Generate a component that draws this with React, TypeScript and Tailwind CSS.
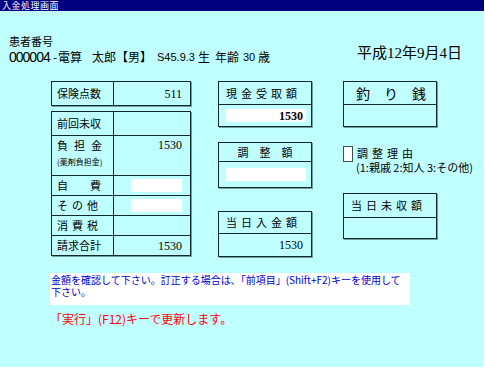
import React from "react";

const jp = "font-['Noto_Sans_CJK_JP',sans-serif]";
const num = "font-['Liberation_Serif','Noto_Sans_CJK_JP',serif]";
const box = "border border-[#102828] shadow-[1px_1px_0_#6f9f9f] box-border";

function Input({ w, value }: { w: string; value?: string }) {
  return (
    <div className={`${w} h-[13px] bg-white flex items-center justify-end pr-[3px] ${num} text-[12px] font-bold leading-none text-black`}>
      {value}
    </div>
  );
}

function SmallBox({
  label,
  headH,
  bodyClass,
  children,
  labelClass,
}: {
  label: React.ReactNode;
  headH: string;
  bodyClass?: string;
  children?: React.ReactNode;
  labelClass?: string;
}) {
  return (
    <div className={`${box} w-[94px] h-[46px] flex flex-col`}>
      <div className={`${headH} border-b border-[#102828] flex items-center ${labelClass ?? "pl-[7px]"}`}>{label}</div>
      <div className={`flex-1 flex ${bodyClass ?? ""}`}>{children}</div>
    </div>
  );
}

export default function App() {
  return (
    <div className={`w-[485px] h-[368px] bg-[#c0ffff] flex flex-col overflow-hidden border-r border-b border-white text-black ${jp}`}>
      <div className="h-[11px] shrink-0 bg-[#000080] text-white text-[9px] leading-[11px] pl-[2px] tracking-[0.5px]">入金処理画面</div>

      <div className="flex h-[65px] shrink-0">
        <div className="flex flex-col pl-[9px] pt-[24px]">
          <div className="text-[11px] leading-[12px] h-[12px]">患者番号</div>
          <div className="mt-[3px] h-[14px] flex items-center text-[12px] leading-[14px] whitespace-pre">
            <span className="shrink-0 font-['Liberation_Sans',sans-serif] text-[14px] tracking-[-1px] w-[44px]">000004</span>
            <span className="shrink-0 w-[5px]">-</span>
            <span className="shrink-0 w-[34px]">電算</span>
            <span className="shrink-0 w-[24px]">太郎</span>
            <span className="shrink-0 w-[41px]">【男】</span>
            <span className="shrink-0 w-[41px] font-['Liberation_Sans',sans-serif] text-[11px]">S45.9.3</span>
            <span className="shrink-0 w-[17px]">生</span>
            <span className="shrink-0 w-[28px]">年齢</span>
            <span className="shrink-0 w-[15px] font-['Liberation_Sans',sans-serif] text-[11px]">30</span>
            <span className="shrink-0">歳</span>
          </div>
        </div>
        <div className={`ml-auto mr-[22px] pt-[33px] text-[15px] leading-[18px] ${num} whitespace-pre`}>平成12年9月4日</div>
      </div>

      <div className="flex mt-[5px] pl-[51px]">
        {/* Column 1 */}
        <div className="w-[140px] flex flex-col">
          <div className={`${box} h-[25px] flex`}>
            <div className="w-[62px] border-r border-[#102828] flex items-center pl-[5px] text-[11px]">保険点数</div>
            <div className={`flex-1 flex items-center justify-end pr-[8px] ${num} text-[12px]`}>511</div>
          </div>
          <div className={`${box} mt-[5px] h-[145px] flex flex-col text-[11px]`}>
            <div className="h-[23px] flex">
              <div className="w-[62px] border-r border-[#102828] flex items-center pl-[5px]">前回未収</div>
              <div className="flex-1" />
            </div>
            <div className="h-[40px] flex border-t border-[#102828]">
              <div className="w-[62px] border-r border-[#102828] flex flex-col pl-[5px] pt-[3px]">
                <span className="tracking-[6px] leading-[13px]">負担金</span>
                <span className="text-[8px] leading-[10px] mt-[5px]">(薬剤負担金)</span>
              </div>
              <div className={`flex-1 flex justify-end pr-[8px] pt-[3px] ${num} text-[12px] leading-[13px]`}>1530</div>
            </div>
            <div className="h-[20px] flex border-t border-[#102828]">
              <div className="w-[62px] border-r border-[#102828] flex items-center pl-[5px] whitespace-pre">自　　費</div>
              <div className="flex-1 flex items-center pl-[17px]">
                <Input w="w-[51px]" />
              </div>
            </div>
            <div className="h-[20px] flex border-t border-[#102828]">
              <div className="w-[62px] border-r border-[#102828] flex items-center pl-[5px] tracking-[4px]">その他</div>
              <div className="flex-1 flex items-center pl-[17px]">
                <Input w="w-[51px]" />
              </div>
            </div>
            <div className="h-[20px] flex border-t border-[#102828]">
              <div className="w-[62px] border-r border-[#102828] flex items-center pl-[5px] tracking-[4px]">消費税</div>
              <div className="flex-1" />
            </div>
            <div className="flex-1 flex border-t border-[#102828]">
              <div className="w-[62px] border-r border-[#102828] flex items-center pl-[5px]">請求合計</div>
              <div className={`flex-1 flex items-center justify-end pr-[8px] ${num} text-[12px]`}>1530</div>
            </div>
          </div>
        </div>

        {/* Column 2 */}
        <div className="ml-[27px] flex flex-col text-[11px]">
          <SmallBox label={<span className="tracking-[4px]">現金受取額</span>} headH="h-[23px]" bodyClass="items-center pl-[7px]">
            <Input w="w-[80px]" value="1530" />
          </SmallBox>
          <div className="mt-[15px]">
            <SmallBox label={<span className="whitespace-pre">調　整　額</span>} headH="h-[19px]" labelClass="justify-center" bodyClass="items-center pl-[7px]">
              <Input w="w-[80px]" />
            </SmallBox>
          </div>
          <div className="mt-[23px]">
            <SmallBox label={<span className="tracking-[4px]">当日入金額</span>} headH="h-[22px]" bodyClass={`items-center justify-end pr-[8px] ${num} text-[12px]`}>
              1530
            </SmallBox>
          </div>
        </div>

        {/* Column 3 */}
        <div className="ml-[31px] flex flex-col text-[11px]">
          <SmallBox label={<span className="whitespace-pre text-[14px]">釣　り　銭</span>} headH="h-[23px]" labelClass="pl-[12px]" />
          <div className="mt-[19px] h-[47px] flex">
            <div className="w-[10px] h-[16px] bg-white border border-[#405050]" />
            <div className="ml-[4px] flex flex-col text-[11px] leading-[14px]">
              <span className="tracking-[4px]">調整理由</span>
              <span className="whitespace-pre -ml-[1px]">(1:親戚 2:知人 3:その他)</span>
            </div>
          </div>
          <SmallBox label={<span className="tracking-[4px]">当日未収額</span>} headH="h-[24px]" />
        </div>
      </div>

      <div className="ml-[50px] mt-[16px] w-[360px] h-[32px] shrink-0 bg-white text-[#0000d0] text-[10px] leading-[12px] pt-[1px] pl-[1px] whitespace-nowrap">
        金額を確認して下さい。訂正する場合は､「前項目」(Shift+F2)キーを使用して<br />下さい。
      </div>
      <div className="ml-[50px] mt-[6px] text-[#ff0000] text-[12px] leading-[15px] whitespace-nowrap">「実行」(F12)キーで更新します。</div>
    </div>
  );
}
